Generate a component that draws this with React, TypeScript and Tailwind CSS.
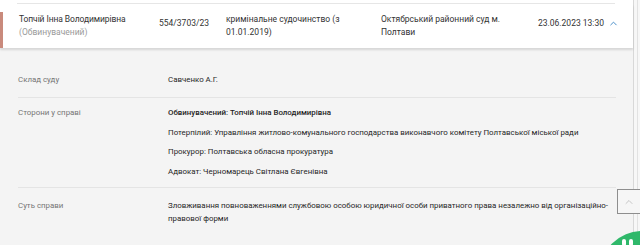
import { ChevronUp } from "lucide-react";

const parties = [
  { text: "Обвинувачений: Топчій Інна Володимирівна", strong: true },
  { text: "Потерпілий: Управління житлово-комунального господарства виконавчого комітету Полтавської міської ради" },
  { text: "Прокурор: Полтавська обласна прокуратура" },
  { text: "Адвокат: Черномарець Світлана Євгенівна" },
];

function DetailRow({
  label,
  children,
  last,
  className,
}: {
  label: string;
  children: React.ReactNode;
  last?: boolean;
  className?: string;
}) {
  return (
    <div className={`flex ${last ? "" : "border-b border-[#e4e4e4]"} ${className ?? ""}`}>
      <div className="w-[150px] shrink-0 text-[#757575]">{label}</div>
      <div className="flex-1 text-[#262626]">{children}</div>
    </div>
  );
}

export default function App() {
  return (
    <div
      className="relative w-[640px] h-[245px] overflow-hidden flex bg-[#f4f4f4]"
      style={{ fontFamily: "Roboto, 'Noto Sans', sans-serif" }}
    >
      <div className="w-[633px] flex flex-col">
        {/* end of the previous row */}
        <div className="bg-white h-[4px] px-[17px]">
          <div className="h-[4px] border-b border-[#e6e6e6] mr-[1px]" />
        </div>

        {/* case row, opened */}
        <div className="relative bg-white h-[44px] flex items-center pl-[19px] pr-[12px] text-[8.5px] leading-[13px] text-[#333] shadow-[0_2px_2px_rgba(0,0,0,0.12)] z-10">
          <div className="absolute left-0 top-[8px] bottom-0 w-[3px] bg-[#c98a7c]" />
          <div className="w-[140px] shrink-0">
            <div className="tracking-[-0.1px]">Топчій Інна Володимирівна</div>
            <div className="text-[#9a9a9a]">(Обвинувачений)</div>
          </div>
          <div className="w-[67px] shrink-0 self-start pt-[13px]">554/3703/23</div>
          <div className="w-[155px] shrink-0 pr-[15px]">кримінальне судочинство (з 01.01.2019)</div>
          <div className="w-[157px] shrink-0 pr-[20px]">Октябрський районний суд м. Полтави</div>
          <div className="flex-1 self-start pt-[13px] flex items-center whitespace-nowrap">
            <span>23.06.2023 13:30</span>
            <ChevronUp className="ml-[4px] w-[11px] h-[11px] text-[#3b86c4]" strokeWidth={2} />
          </div>
        </div>

        {/* details */}
        <div className="flex-1 px-[18px] pt-[15px] text-[7.9px] leading-[13px]">
          <div className="mr-[-1px]">
            <DetailRow label="Склад суду" className="pt-[10px] pb-[11px]">
              Савченко А.Г.
            </DetailRow>
            <DetailRow label="Сторони у справі" className="pt-[8px] pb-[9px]">
              <div className="flex flex-col gap-[6.5px]">
                {parties.map((p) => (
                  <div key={p.text} className={p.strong ? "font-medium text-[#1f1f1f]" : ""}>
                    {p.text}
                  </div>
                ))}
              </div>
            </DetailRow>
            <DetailRow label="Суть справи" last className="pt-[11px]">
              <div>
                Зловживання повноваженнями службовою особою юридичної особи приватного права незалежно від організаційно-правової форми
              </div>
            </DetailRow>
          </div>
        </div>
      </div>

      {/* page edge / scrollbar */}
      <div className="w-[7px] border-l border-[#d8d8d8] bg-[#f7f7f7] flex">
        <div className="ml-[3px] border-l border-[#e2e2e2]" />
      </div>

      {/* scroll to top */}
      <button className="absolute left-[617px] top-[189px] w-[26px] h-[25px] border border-[#8e8e8e] bg-[#f6f6f6] flex items-center justify-center">
        <ChevronUp className="w-[12px] h-[12px] text-[#b5b5b5] -ml-[3px]" strokeWidth={1.5} />
      </button>

      {/* chat bubble */}
      <div className="absolute left-[600px] top-[231px] w-[84px] h-[84px] rounded-full bg-[#2fb86a]">
        <div className="absolute left-[22px] top-[8px] flex gap-[3px]">
          <div className="w-[4px] h-[7px] rounded-[2px] bg-white" />
          <div className="w-[4px] h-[7px] rounded-[2px] bg-white" />
        </div>
      </div>
    </div>
  );
}
